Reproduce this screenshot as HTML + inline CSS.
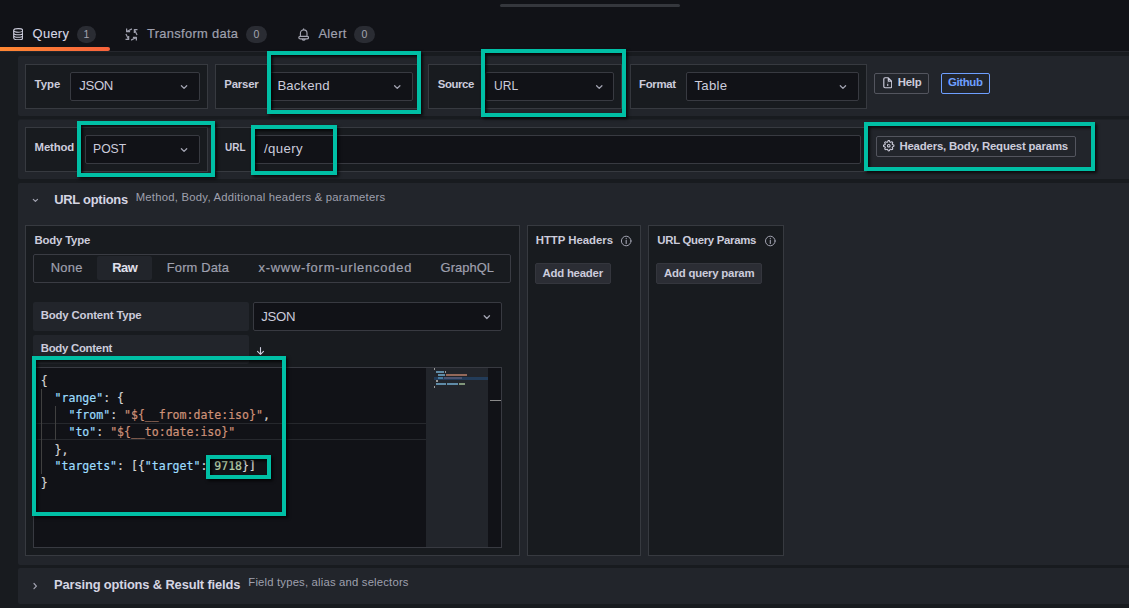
<!DOCTYPE html>
<html lang="en">
<head>
<meta charset="utf-8">
<title>Query editor</title>
<style>
*{box-sizing:border-box;margin:0;padding:0}
html,body{width:1129px;height:608px;overflow:hidden;background:#181b1f}
body{position:relative;font-family:"Liberation Sans",sans-serif;color:#ccccdc;font-size:13px}
.a{position:absolute}
.t{position:absolute;white-space:nowrap;line-height:1}
.panel{position:absolute;background:#22252b;left:18px;width:1113px;border-radius:2px}
.box{position:absolute;background:#181b1f;border:1px solid #373a40}
.sel{position:absolute;background:#111217;border:1px solid #383a41;border-radius:2px}
.pill{position:absolute;background:#2a2c33;border-radius:9px;color:#a4a5b2;font-size:10.5px;text-align:center;height:17px;line-height:17px;width:19px;top:26px}
.btn{position:absolute;border:1px solid #53555e;border-radius:2px}
.hl{position:absolute;border:4px solid #00bfa5;box-shadow:2px 2px 3px rgba(0,0,0,.75),inset 2px 2px 3px rgba(0,0,0,.75)}
.code{font-family:"DejaVu Sans Mono","Liberation Mono",monospace;font-size:11.545px;white-space:pre;position:absolute;line-height:17px;height:17px;left:40.7px;color:#d4d4d4;-webkit-text-stroke:0.2px}
.k{color:#9cdcfe}.s{color:#ce9178}.n{color:#b5cea8}
.mm{position:absolute;height:2px}
</style>
</head>
<body>
<!-- tab bar -->
<div class="a" style="left:0;top:0;width:1129px;height:51px;background:#111217"></div>
<div class="a" style="left:500px;top:4px;width:180px;height:3px;border-radius:2px;background:#35373d"></div>
<div class="a" style="left:0;top:51px;width:1129px;height:1px;background:#25272d"></div>
<div class="a" style="left:0;top:47px;width:110px;height:4px;border-radius:0 2px 2px 0;background:linear-gradient(90deg,#ff8833 0%,#f8633c 100%)"></div>
<svg class="a" style="left:13.100px;top:27.900px" width="10.400" height="12.400" viewBox="0 0 10.4 12.4" fill="none" stroke="#ccccdc" stroke-width="1.100"><ellipse cx="5.200" cy="2.400" rx="4.500" ry="1.800"/><path d="M.7 2.400V10c0 1 2 1.800 4.500 1.800s4.500-.8 4.500-1.800V2.400M.7 5c0 1 2 1.800 4.500 1.800s4.500-.8 4.500-1.800M.7 7.500c0 1 2 1.800 4.500 1.800s4.500-.8 4.500-1.800"/></svg>
<div class="pill" style="left:77px">1</div>
<svg class="a" style="left:124.700px;top:27.700px" width="13" height="13" viewBox="0 0 12.8 12.8" fill="none" stroke="#9fa0ae" stroke-width="1.200" stroke-linejoin="round"><path d="M1.600 .5V3.600H5M1.900 3.400L6.800 .9M12.300 1.600H9.200V5M9.400 1.900L11.900 6.800M11.200 12.300V9.200H7.800M10.900 9.400L6 11.900M.5 11.200H3.600V7.800M3.400 10.900L.9 6"/></svg>
<div class="pill" style="left:246px;width:21px">0</div>
<svg class="a" style="left:297.500px;top:27.500px" width="11.500" height="13.500" viewBox="0 0 11.5 13.5" fill="none" stroke="#a4a5b2" stroke-width="1.150" stroke-linecap="round"><path d="M5.700 .7v.9M2.400 8.300V5.200a3.300 3.300 0 0 1 6.600 0V8.300M2.400 8.300H9c1 0 1.600.6 1.600 1.300s-.6 1.200-1.600 1.200H2.400c-1 0-1.600-.5-1.600-1.200s.6-1.300 1.600-1.300zM4.200 11.200a1.600 1.600 0 0 0 3 0"/></svg>
<div class="pill" style="left:354px;width:21px">0</div>

<!-- row 1 -->
<div class="panel" style="top:56px;height:60px"></div>
<div class="box" style="left:25px;top:64px;width:183px;height:45px"></div>
<div class="sel" style="left:70px;top:72px;width:130px;height:29px"></div>
<div class="box" style="left:215px;top:64px;width:206px;height:45px"></div>
<div class="sel" style="left:269px;top:72px;width:144px;height:29px"></div>
<div class="box" style="left:428px;top:64px;width:194px;height:45px"></div>
<div class="sel" style="left:485px;top:72px;width:129px;height:29px"></div>
<div class="box" style="left:630px;top:64px;width:237px;height:45px"></div>
<div class="sel" style="left:686px;top:72px;width:173px;height:29px"></div>
<div class="btn" style="left:874px;top:73px;width:55px;height:21px"></div>
<svg class="a" style="left:882.500px;top:77.300px" width="9.500" height="11.600" viewBox="0 0 9.5 11.6" fill="none" stroke="#ccccdc" stroke-width="1.150" stroke-linejoin="round"><path d="M.8 2a1.200 1.200 0 0 1 1.200-1.200h3.300L8.700 4.200v5.400a1.200 1.200 0 0 1-1.200 1.200H2a1.200 1.200 0 0 1-1.200-1.200zM5.300 .8v3.400H8.700"/><path d="M4.750 6.800v2.300M4.750 5.200v.3" stroke-width="1.050"/></svg>
<div class="btn" style="left:941px;top:73px;width:49px;height:21px;border-color:#6e9fff"></div>

<!-- row 2 -->
<div class="panel" style="top:119px;height:60px;background:#1d2025"></div><div class="panel" style="top:120px;height:59px"></div>
<div class="box" style="left:25px;top:127px;width:183px;height:45px"></div>
<div class="sel" style="left:85px;top:135px;width:115px;height:29px"></div>
<div class="box" style="left:215px;top:127px;width:652px;height:45px"></div>
<div class="sel" style="left:254px;top:135px;width:607px;height:29px"></div>
<div class="btn" style="left:876px;top:136px;width:200px;height:21px"></div>

<!-- row 3 -->
<div class="panel" style="top:183px;height:382px"></div>
<div class="box" style="left:25px;top:225px;width:495px;height:331px"></div>
<div class="a" style="left:33px;top:254px;width:478px;height:29px;border:1px solid #3a3c43;border-radius:2px;background:#181b1f"></div>
<div class="a" style="left:97px;top:256px;width:55px;height:24px;border-radius:2px;background:#22252b"></div>
<div class="a" style="left:33px;top:302px;width:216px;height:29px;border-radius:2px;background:#22252b"></div>
<div class="sel" style="left:253px;top:302px;width:249px;height:29px"></div>
<div class="a" style="left:33px;top:335px;width:216px;height:29px;border-radius:2px;background:#22252b"></div>

<!-- editor -->
<div class="a" style="left:33px;top:367px;width:469px;height:181px;border:1px solid #383a41;background:#111217"></div>
<div class="a" style="left:426px;top:368px;width:62px;height:179px;background:#22252b"></div>
<div class="a" style="left:34px;top:423px;width:392px;height:17px;border-top:1px solid #26282d;border-bottom:1px solid #26282d"></div>
<div class="a" style="left:41px;top:389px;width:1px;height:85px;background:#404040"></div>
<div class="a" style="left:55px;top:406px;width:1px;height:34px;background:#404040"></div>
<div class="code" style="top:373px">{</div>
<div class="code" style="top:390px">  <span class="k">"range"</span>: {</div>
<div class="code" style="top:407px">    <span class="k">"from"</span>: <span class="s">"${__from:date:iso}"</span>,</div>
<div class="code" style="top:424px">    <span class="k">"to"</span>: <span class="s">"${__to:date:iso}"</span></div>
<div class="code" style="top:442px">  },</div>
<div class="code" style="top:458px">  <span class="k">"targets"</span>: [{<span class="k">"target"</span>: <span class="n">9718</span>}]</div>
<div class="code" style="top:475px">}</div>
<!-- minimap -->
<div class="a" style="left:434px;top:377px;width:54px;height:3px;background:#233c59"></div>
<div class="mm" style="left:434px;top:368px;width:1px;background:#989898"></div>
<div class="mm" style="left:436px;top:371px;width:8px;background:#5f8ba7"></div><div class="mm" style="left:445px;top:371px;width:1px;background:#989898"></div>
<div class="mm" style="left:438px;top:374px;width:7px;background:#5f8ba7"></div><div class="mm" style="left:446px;top:374px;width:21px;background:#94695a"></div>
<div class="mm" style="left:438px;top:377px;width:5px;background:#447aa0"></div><div class="mm" style="left:444px;top:377px;width:18px;background:#4c5471"></div>
<div class="mm" style="left:436px;top:380px;width:2px;background:#989898"></div>
<div class="mm" style="left:436px;top:383px;width:10px;background:#5f8ba7"></div><div class="mm" style="left:447px;top:383px;width:11px;background:#5f8ba7"></div><div class="mm" style="left:459px;top:383px;width:6px;background:#80967a"></div>
<div class="mm" style="left:434px;top:386px;width:1px;background:#989898"></div>
<div class="a" style="left:490px;top:400px;width:11px;height:1px;background:#8a8a8a"></div>

<!-- right boxes -->
<div class="box" style="left:527px;top:225px;width:114px;height:331px"></div>
<div class="box" style="left:648px;top:225px;width:136px;height:331px"></div>
<div class="a" style="left:535px;top:263px;width:76px;height:21px;border-radius:2px;background:#2b2d34;border:1px solid #34363d"></div>
<div class="a" style="left:656px;top:263px;width:106px;height:21px;border-radius:2px;background:#2b2d34;border:1px solid #34363d"></div>

<!-- row 4 -->
<div class="panel" style="top:568px;height:36px"></div>

<!-- chevrons -->
<svg class="a" style="left:0;top:0" width="1129" height="608" fill="none" stroke="#a2a3b1" stroke-width="1.300" stroke-linecap="round" stroke-linejoin="round">
<path d="M181.400 85.700l2.650 2.650 2.650-2.650"/><path d="M394.600 85.700l2.650 2.650 2.650-2.650"/><path d="M596.600 85.700l2.650 2.650 2.650-2.650"/><path d="M840.300 85.700l2.650 2.650 2.650-2.650"/>
<path d="M181.400 148.700l2.650 2.650 2.650-2.650"/><path d="M484.200 315.800l2.650 2.650 2.650-2.650"/>
<path d="M33.300 199.300l2.100 2.100 2.100-2.100" stroke-width="1.200"/><path d="M34 583.500l2.400 2.600-2.400 2.600" stroke-width="1.200"/>
<path d="M260.500 347.600v6.500M257.500 351.400l3 3 3-3" stroke="#ccccdc" stroke-width="1.100"/>
<circle cx="626.200" cy="241" r="4.800" stroke-width="1"/><path d="M626.200 240.300v3.200M626.200 238.300v.3" stroke-width="1.100"/>
<circle cx="770.300" cy="241" r="4.800" stroke-width="1"/><path d="M770.300 240.300v3.200M770.300 238.300v.3" stroke-width="1.100"/>
</svg>
<!-- gear -->
<svg class="a" style="left:883.400px;top:140.100px" width="11.500" height="11.500" viewBox="0 0 24 24" fill="none" stroke="#d2d2e0" stroke-width="2.200"><circle cx="12" cy="12" r="2.800"/><path d="M19.400 15a1.650 1.650 0 0 0 .33 1.820l.06.06a2 2 0 1 1-2.830 2.830l-.06-.06a1.650 1.650 0 0 0-1.820-.33 1.650 1.650 0 0 0-1 1.510V21a2 2 0 0 1-4 0v-.09A1.650 1.650 0 0 0 9 19.400a1.650 1.650 0 0 0-1.820.33l-.06.06a2 2 0 1 1-2.830-2.830l.06-.06a1.650 1.650 0 0 0 .33-1.820 1.650 1.650 0 0 0-1.510-1H3a2 2 0 0 1 0-4h.09A1.650 1.650 0 0 0 4.600 9a1.650 1.650 0 0 0-.33-1.820l-.06-.06a2 2 0 1 1 2.830-2.830l.06.06a1.650 1.650 0 0 0 1.820.33H9a1.650 1.650 0 0 0 1-1.510V3a2 2 0 0 1 4 0v.09a1.650 1.650 0 0 0 1 1.510 1.650 1.650 0 0 0 1.820-.33l.06-.06a2 2 0 1 1 2.830 2.830l-.06.06a1.650 1.650 0 0 0-.33 1.820V9a1.650 1.650 0 0 0 1.510 1H21a2 2 0 0 1 0 4h-.09a1.650 1.650 0 0 0-1.510 1z"/></svg>


<div class="t" style="left:32.60px;top:26px;line-height:15px;font-size:12.9px;color:#d8d8e6;letter-spacing:0.298px;-webkit-text-stroke:0.1px #d8d8e6;">Query</div>
<div class="t" style="left:147.00px;top:26px;line-height:15px;font-size:12.9px;color:#9fa0ae;letter-spacing:0.312px;-webkit-text-stroke:0.2px #9fa0ae;">Transform data</div>
<div class="t" style="left:318.40px;top:26px;line-height:15px;font-size:12.9px;color:#9fa0ae;letter-spacing:0.371px;-webkit-text-stroke:0.2px #9fa0ae;">Alert</div>
<div class="t" style="left:34.60px;top:78px;line-height:12px;font-size:11.4px;color:#ccccdc;font-weight:bold;letter-spacing:-0.017px;">Type</div>
<div class="t" style="left:79.30px;top:78px;line-height:15px;font-size:13.2px;color:#ccccdc;letter-spacing:-0.391px;">JSON</div>
<div class="t" style="left:224.30px;top:78px;line-height:12px;font-size:11.4px;color:#ccccdc;font-weight:bold;letter-spacing:-0.194px;">Parser</div>
<div class="t" style="left:277.40px;top:78px;line-height:15px;font-size:13.2px;color:#ccccdc;letter-spacing:0.129px;">Backend</div>
<div class="t" style="left:437.70px;top:78px;line-height:12px;font-size:11.4px;color:#ccccdc;font-weight:bold;letter-spacing:-0.385px;">Source</div>
<div class="t" style="left:493.50px;top:78px;line-height:15px;font-size:13.2px;color:#ccccdc;transform:scaleX(0.9132);transform-origin:0 0;">URL</div>
<div class="t" style="left:639.00px;top:78px;line-height:12px;font-size:11.4px;color:#ccccdc;font-weight:bold;letter-spacing:-0.322px;">Format</div>
<div class="t" style="left:694.40px;top:78px;line-height:15px;font-size:13.2px;color:#ccccdc;letter-spacing:0.317px;">Table</div>
<div class="t" style="left:897.70px;top:76px;line-height:12px;font-size:11.4px;color:#ccccdc;font-weight:bold;letter-spacing:-0.229px;">Help</div>
<div class="t" style="left:948.10px;top:76px;line-height:12px;font-size:11.4px;color:#6e9fff;font-weight:bold;letter-spacing:-0.381px;">Github</div>
<div class="t" style="left:34.60px;top:141px;line-height:12px;font-size:11.4px;color:#ccccdc;font-weight:bold;letter-spacing:-0.180px;">Method</div>
<div class="t" style="left:93.40px;top:141px;line-height:15px;font-size:13.2px;color:#ccccdc;transform:scaleX(0.9246);transform-origin:0 0;">POST</div>
<div class="t" style="left:224.50px;top:141px;line-height:12px;font-size:11.4px;color:#ccccdc;font-weight:bold;transform:scaleX(0.8753);transform-origin:0 0;">URL</div>
<div class="t" style="left:264.00px;top:141px;line-height:15px;font-size:13.2px;color:#ccccdc;letter-spacing:0.369px;">/query</div>
<div class="t" style="left:899.40px;top:140px;line-height:12px;font-size:11.4px;color:#ccccdc;font-weight:bold;letter-spacing:-0.181px;">Headers, Body, Request params</div>
<div class="t" style="left:54.20px;top:192px;line-height:15px;font-size:12.9px;color:#d5d5e3;font-weight:bold;letter-spacing:-0.239px;">URL options</div>
<div class="t" style="left:135.70px;top:191px;line-height:12px;font-size:11.3px;color:#9fa0ae;letter-spacing:0.235px;">Method, Body, Additional headers &amp; parameters</div>
<div class="t" style="left:34.50px;top:234px;line-height:12px;font-size:11.4px;color:#ccccdc;font-weight:bold;letter-spacing:-0.199px;">Body Type</div>
<div class="t" style="left:50.70px;top:260px;line-height:15px;font-size:12.9px;color:#9fa0ae;letter-spacing:0.324px;-webkit-text-stroke:0.2px #9fa0ae;">None</div>
<div class="t" style="left:112.20px;top:260px;line-height:15px;font-size:12.9px;color:#e0e0ec;font-weight:bold;letter-spacing:-0.458px;">Raw</div>
<div class="t" style="left:166.80px;top:260px;line-height:15px;font-size:12.9px;color:#9fa0ae;letter-spacing:0.164px;-webkit-text-stroke:0.2px #9fa0ae;">Form Data</div>
<div class="t" style="left:258.40px;top:260px;line-height:15px;font-size:12.9px;color:#9fa0ae;letter-spacing:0.809px;-webkit-text-stroke:0.2px #9fa0ae;">x-www-form-urlencoded</div>
<div class="t" style="left:440.60px;top:260px;line-height:15px;font-size:12.9px;color:#9fa0ae;letter-spacing:0.061px;-webkit-text-stroke:0.2px #9fa0ae;">GraphQL</div>
<div class="t" style="left:40.70px;top:309px;line-height:12px;font-size:11.4px;color:#ccccdc;font-weight:bold;letter-spacing:-0.161px;">Body Content Type</div>
<div class="t" style="left:261.30px;top:309px;line-height:15px;font-size:13.2px;color:#ccccdc;letter-spacing:-0.324px;">JSON</div>
<div class="t" style="left:40.70px;top:342px;line-height:12px;font-size:11.4px;color:#ccccdc;font-weight:bold;letter-spacing:-0.270px;">Body Content</div>
<div class="t" style="left:535.70px;top:234px;line-height:12px;font-size:11.4px;color:#ccccdc;font-weight:bold;letter-spacing:-0.032px;">HTTP Headers</div>
<div class="t" style="left:657.30px;top:234px;line-height:12px;font-size:11.4px;color:#ccccdc;font-weight:bold;letter-spacing:-0.302px;">URL Query Params</div>
<div class="t" style="left:542.50px;top:267px;line-height:12px;font-size:11.4px;color:#ccccdc;font-weight:bold;letter-spacing:-0.230px;">Add header</div>
<div class="t" style="left:664.00px;top:267px;line-height:12px;font-size:11.4px;color:#ccccdc;font-weight:bold;letter-spacing:-0.221px;">Add query param</div>
<div class="t" style="left:54.10px;top:577px;line-height:15px;font-size:12.9px;color:#d5d5e3;font-weight:bold;letter-spacing:-0.141px;">Parsing options &amp; Result fields</div>
<div class="t" style="left:248.30px;top:576px;line-height:12px;font-size:11.3px;color:#9fa0ae;letter-spacing:0.185px;">Field types, alias and selectors</div>

<!-- highlights -->
<div class="hl" style="left:267px;top:51px;width:154px;height:63px"></div>
<div class="hl" style="left:481px;top:49px;width:145px;height:68px"></div>
<div class="hl" style="left:77px;top:121px;width:138px;height:56px"></div>
<div class="hl" style="left:251px;top:125px;width:86px;height:50px"></div>
<div class="hl" style="left:864px;top:122px;width:231px;height:49px"></div>
<div class="hl" style="left:32px;top:356px;width:254px;height:160px"></div>
<div class="hl" style="left:206px;top:455px;width:65px;height:24px;border-width:4px"></div>
</body>
</html>
